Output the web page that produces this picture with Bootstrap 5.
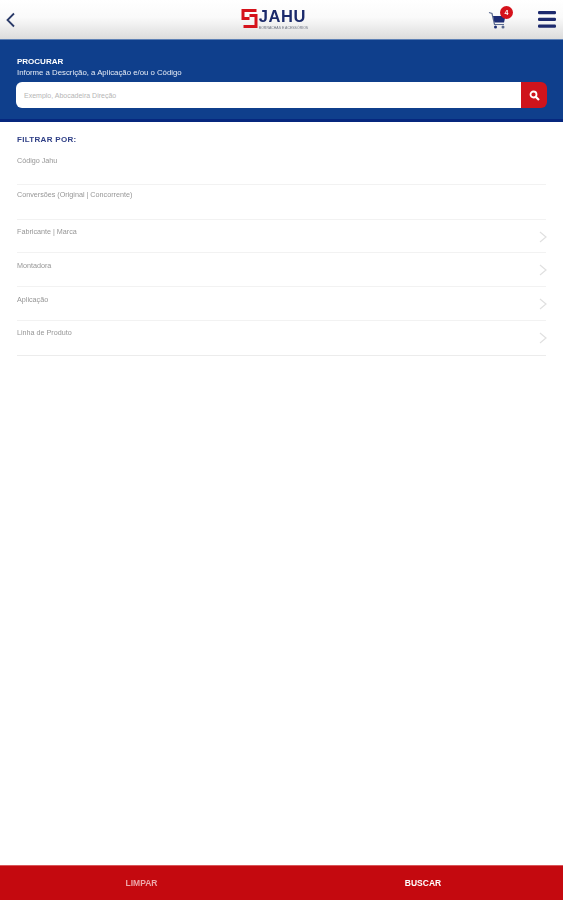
<!DOCTYPE html>
<html lang="pt">
  <head>
    <title>Jahu - Procurar</title>
    <link href="https://cdn.jsdelivr.net/npm/bootstrap@5.3.3/dist/css/bootstrap.min.css" rel="stylesheet">
    <style>
      body {
        font-family: "Liberation Sans", Arial, sans-serif;
        background: #fff;
        height: 900px;
        overflow: hidden;
      }
      .soft { filter: blur(.4px); }
      .app-top {
        height: 39px;
        background: linear-gradient(#fff 0%, #fafafa 45%, #dcdcdc 100%);
      }
      .top-slot { width: 60px; }
      .top-actions { padding-right: 7px; gap: 30px; }
      .logo-mark { gap: 1px; margin-right: -1px; }
      .logo-word {
        font-size: 16.500px;
        line-height: 15px;
        font-weight: 700;
        color: #1b2a6b;
        letter-spacing: .6px;
      }
      .logo-sub {
        font-size: 3.500px;
        line-height: 4px;
        margin-top: 2px;
        color: #6c7280;
        white-space: nowrap;
      }
      .cart-count {
        top: -4px;
        left: 12px;
        width: 13px;
        height: 13px;
        font-size: 7px;
        line-height: 13px;
        background: #d5121b;
        color: #fff;
      }
      .search-band {
        height: 83px;
        background: #0f3f8c;
        border-top: 1px solid #5d80b5;
        border-bottom: 3px solid #06277e;
        padding: 16px 16px 0;
        color: #fff;
      }
      .search-title { font-size: 8px; line-height: 11px; font-weight: 700; padding-left: 1px; }
      .search-help { font-size: 7.800px; line-height: 11px; margin-bottom: 4px; padding-left: 1px; color: #e6ecf6; }
      .search-box { height: 26px; width: 531px; }
      .search-box input {
        height: 26px;
        font-size: 7px;
        padding: 0 8px;
        border: 0;
        border-radius: 6px 0 0 6px;
        box-shadow: none;
      }
      .search-box input::placeholder { color: #b5b5b5; }
      .search-go {
        width: 26px;
        height: 26px;
        padding: 0;
        border: 0;
        border-radius: 0 6px 6px 0;
        background: #cf141c;
      }
      .filter-area { padding: 13px 17px 0; }
      .filter-head {
        font-size: 8px;
        line-height: 10px;
        font-weight: 700;
        letter-spacing: .3px;
        color: #2f3f86;
        margin-bottom: 11px;
      }
      .filter-row {
        border-bottom: 1px solid #f2f2f2;
        height: 34px;
        padding-top: 7.500px;
      }
      .filter-text {
        font-size: 7.200px;
        line-height: 9px;
        color: #969696;
      }
      .filter-row.first { height: 29px; padding-top: 0; }
      .filter-row.second { height: 35px; padding-top: 5px; }
      .filter-row.tall { height: 33px; padding-top: 7px; }
      .filter-row.last { border-bottom-color: #ececec; height: 35px; padding-top: 7px; }
      .row-arrow { margin: 3.500px -1px 0 0; }
      .bottom-bar {
        height: 35px;
        background: #c4090f;
        border-top: 1px solid #d9565a;
      }
      .bottom-bar .btn {
        font-size: 8.500px;
        font-weight: 700;
        padding: 0;
        border: 0;
        height: 34px;
      }
      .clear-btn { width: 283px; color: #eda7a9; }
      .search-btn { width: 280px; color: #fff; }
    </style>
  </head>
  <body>
    <div class="d-flex flex-column vh-100">
      <header class="app-top d-flex align-items-center justify-content-between">
        <div class="top-slot ps-1 d-flex">
          <svg width="12" height="16" viewBox="0 0 12 16" fill="none" stroke="#2a3a68" stroke-width="1.800"><path d="M10 1.500 3.500 8l6.500 6.500"/></svg>
        </div>
        <div class="logo-mark d-flex align-items-start">
          <svg width="17" height="19" viewBox="0 0 16 19" fill="none" stroke="#d5121b" stroke-width="3"><path d="M15 1.500H1.500v8H8M8 6.500h6.500v11H2"/></svg>
          <div>
            <div class="logo-word soft">JAHU</div>
            <div class="logo-sub soft">BORRACHAS E ACESSÓRIOS</div>
          </div>
        </div>
        <div class="top-actions d-flex align-items-center justify-content-end">
          <div class="position-relative d-flex">
            <svg width="20" height="20" viewBox="0 0 20 20"><path d="M1 2.500 4 3.500l2.500 11H16" fill="none" stroke="#5a6a90" stroke-width="1.200"/><path d="M5 6h12.500l-1.500 6.500H6.500z" fill="#1d2d74"/><circle cx="7.500" cy="17" r="1.500" fill="#1d2d74"/><circle cx="15" cy="17" r="1.500" fill="#5a6a90"/></svg>
            <span class="cart-count position-absolute rounded-circle text-center fw-bold soft">4</span>
          </div>
          <svg width="18" height="17" viewBox="0 0 18 17" fill="#1d2a6e"><rect y="0" width="18" height="3.200" rx="1.200"/><rect y="6.800" width="18" height="3.200" rx="1.200"/><rect y="13.600" width="18" height="3.200" rx="1.200"/></svg>
        </div>
      </header>

      <section class="search-band">
        <div class="search-title soft">PROCURAR</div>
        <div class="search-help soft">Informe a Descrição, a Aplicação e/ou o Código</div>
        <div class="search-box input-group flex-nowrap">
          <input type="text" class="form-control" placeholder="Exemplo, Abocadeira Direção">
          <button class="search-go btn d-flex align-items-center justify-content-center" type="button" aria-label="Buscar">
            <svg width="11" height="11" viewBox="0 0 11 11" fill="none" stroke="#fff"><circle cx="4.500" cy="4.500" r="3" stroke-width="1.800"/><path d="m7 7 3 3" stroke-width="2.200"/></svg>
          </button>
        </div>
      </section>

      <main class="filter-area flex-grow-1">
        <div class="filter-head soft">FILTRAR POR:</div>
        <div class="filter-row first"><span class="filter-text soft d-block">Código Jahu</span></div>
        <div class="filter-row second"><span class="filter-text soft d-block">Conversões (Original | Concorrente)</span></div>
        <div class="filter-row tall d-flex justify-content-between"><span class="filter-text soft">Fabricante | Marca</span>
          <svg class="row-arrow" width="8" height="12" viewBox="0 0 8 12" fill="none" stroke="#e0e0e0" stroke-width="1.200"><path d="m1 1 6 5-6 5"/></svg>
        </div>
        <div class="filter-row d-flex justify-content-between"><span class="filter-text soft">Montadora</span>
          <svg class="row-arrow" width="8" height="12" viewBox="0 0 8 12" fill="none" stroke="#e0e0e0" stroke-width="1.200"><path d="m1 1 6 5-6 5"/></svg>
        </div>
        <div class="filter-row d-flex justify-content-between"><span class="filter-text soft">Aplicação</span>
          <svg class="row-arrow" width="8" height="12" viewBox="0 0 8 12" fill="none" stroke="#e0e0e0" stroke-width="1.200"><path d="m1 1 6 5-6 5"/></svg>
        </div>
        <div class="filter-row last d-flex justify-content-between"><span class="filter-text soft">Linha de Produto</span>
          <svg class="row-arrow" width="8" height="12" viewBox="0 0 8 12" fill="none" stroke="#e0e0e0" stroke-width="1.200"><path d="m1 1 6 5-6 5"/></svg>
        </div>
      </main>

      <footer class="bottom-bar d-flex">
        <button class="clear-btn btn" type="button"><span class="soft d-inline-block">LIMPAR</span></button>
        <button class="search-btn btn" type="button"><span class="soft d-inline-block">BUSCAR</span></button>
      </footer>
    </div>
    <script src="https://cdn.jsdelivr.net/npm/bootstrap@5.3.3/dist/js/bootstrap.bundle.min.js"></script>
  </body>
</html>
